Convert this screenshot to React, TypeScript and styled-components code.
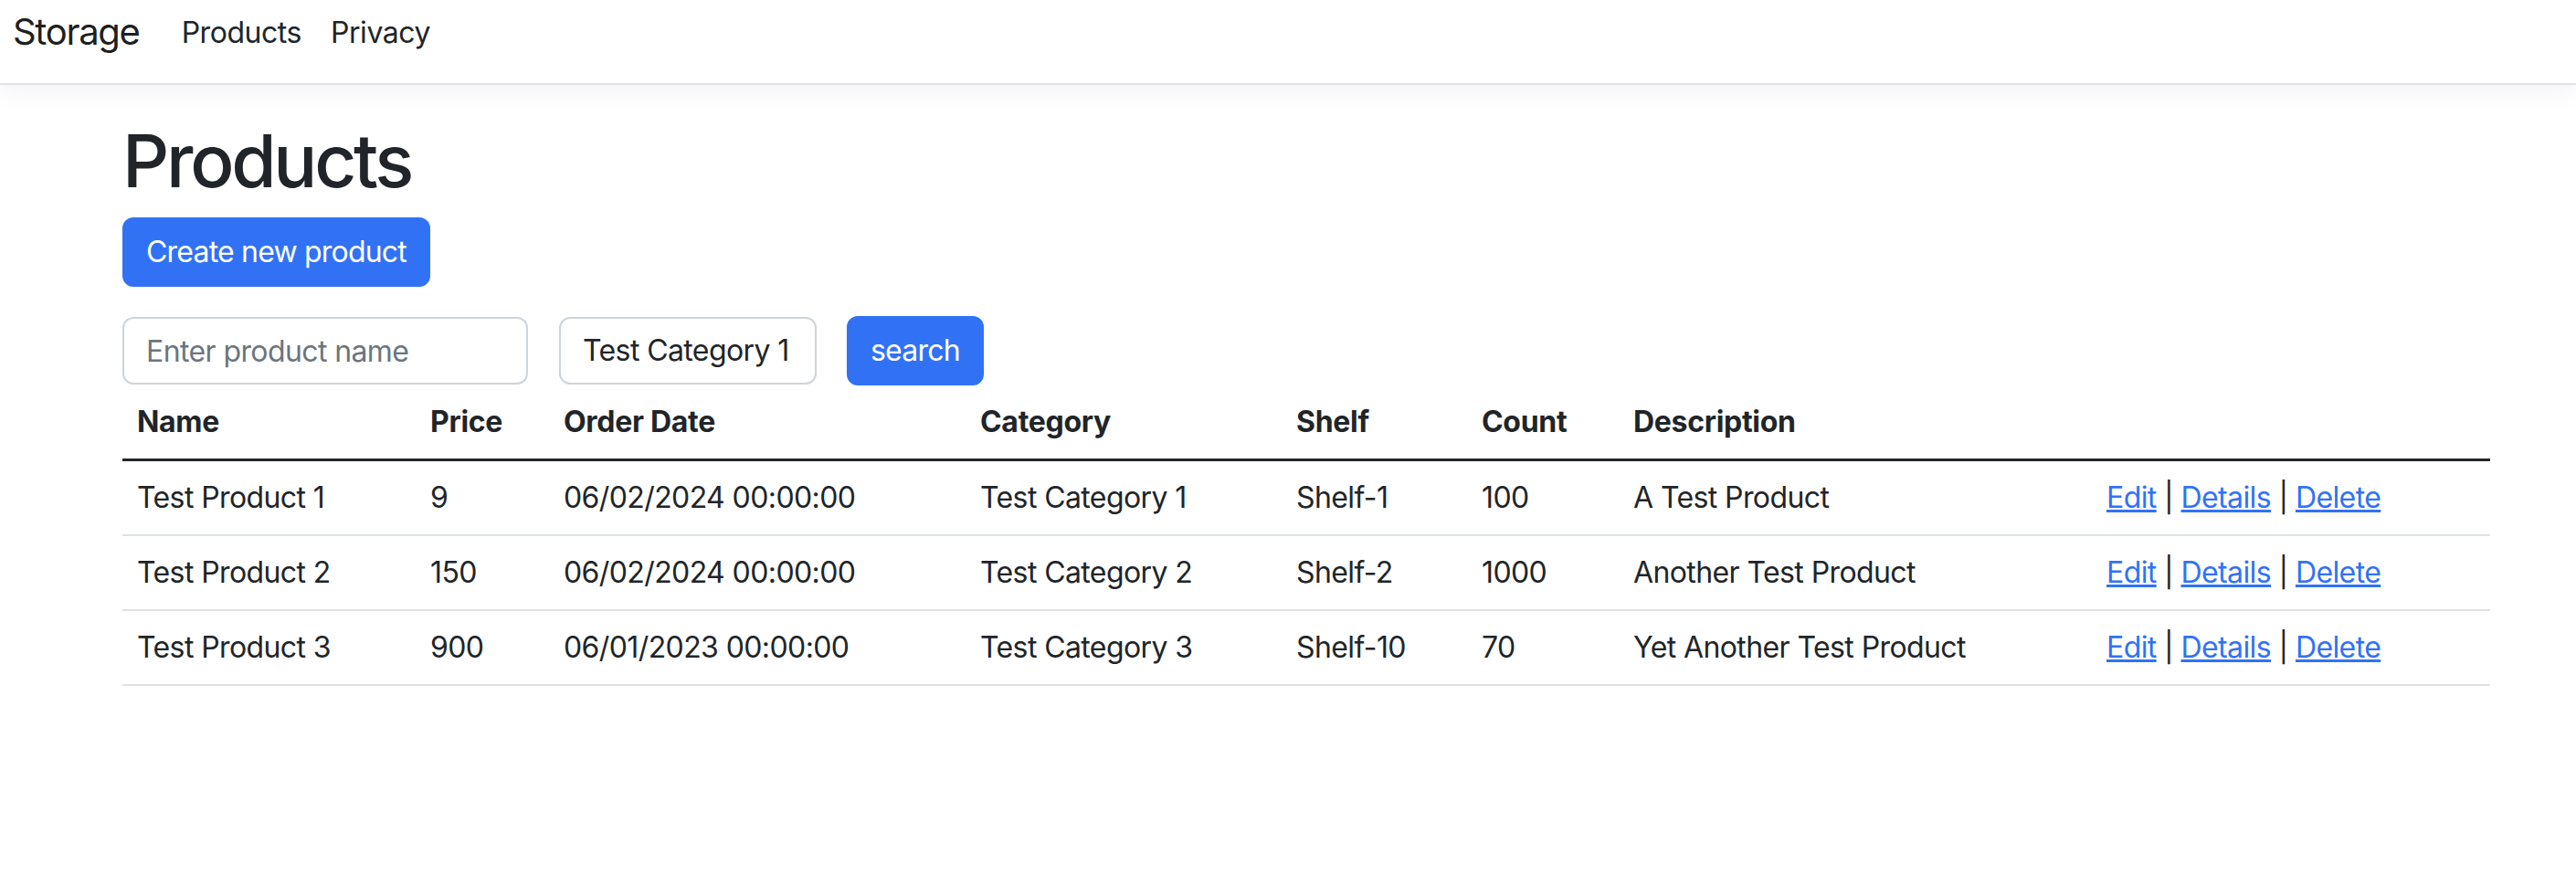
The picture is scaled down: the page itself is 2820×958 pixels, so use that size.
import React from "react";
import styled, { createGlobalStyle } from "styled-components";

const Global = createGlobalStyle`
  html, body { margin: 0; padding: 0; background: #ffffff; }
  body {
    font-family: Inter, "Noto Sans", "Liberation Sans", sans-serif;
    font-size: 32px;
    line-height: 48px;
    letter-spacing: -0.6px;
    color: #212529;
  }
  *, *::before, *::after { box-sizing: border-box; }
`;

const BLUE = "#3172f5";

const NavBar = styled.nav`
  height: 93px;
  display: flex;
  align-items: flex-start;
  padding: 0 14px;
  background: #ffffff;
  border-bottom: 2px solid #dee2e6;
  box-shadow: 0 8px 24px rgba(0, 0, 0, 0.05);
`;

const Brand = styled.a`
  font-size: 40px;
  line-height: 60px;
  letter-spacing: -1.3px;
  margin-top: 5px;
  margin-right: 30px;
  color: rgba(0, 0, 0, 0.9);
  text-decoration: none;
`;

const NavList = styled.ul`
  display: flex;
  list-style: none;
  margin: 0;
  padding: 0;
`;

const NavLink = styled.a`
  display: block;
  padding: 12px 16px 0;
  font-size: 32px;
  line-height: 48px;
  letter-spacing: -0.45px;
  color: #212529;
  text-decoration: none;
`;

const Main = styled.main`
  width: 2592px;
  margin: 0 0 0 134px;
  padding-top: 35px;
`;

const Title = styled.h1`
  margin: 0 0 14px;
  font-size: 80px;
  line-height: 96px;
  font-weight: 500;
  letter-spacing: -3.3px;
  color: #212529;
`;

const PrimaryButton = styled.button<{ $px: number }>`
  display: inline-flex;
  align-items: center;
  height: 76px;
  padding: 0 ${(p) => p.$px}px;
  border: 2px solid ${BLUE};
  border-radius: 12px;
  background: ${BLUE};
  color: #ffffff;
  font-family: inherit;
  font-size: 32px;
  line-height: 48px;
  letter-spacing: -0.8px;
  font-weight: 400;
  cursor: pointer;
`;

const CreateRow = styled.div`
  margin-bottom: 32px;
`;

const SearchForm = styled.form`
  display: flex;
  align-items: center;
  height: 76px;
`;

const fieldBase = `
  height: 74px;
  border: 2px solid #ced4da;
  border-radius: 12px;
  padding: 0 24px;
  font-family: inherit;
  font-size: 32px;
  line-height: 48px;
  letter-spacing: -0.6px;
  color: #212529;
  background: #ffffff;
  outline: none;
`;

const TextInput = styled.input<{ $w: number }>`
  ${fieldBase}
  width: ${(p) => p.$w}px;
  margin-right: 34px;
  &::placeholder { color: #6c757d; }
`;

const SelectInput = styled.select<{ $w: number }>`
  ${fieldBase}
  width: ${(p) => p.$w}px;
  margin-right: 33px;
  appearance: none;
  -webkit-appearance: none;
`;

const Table = styled.table`
  width: 2592px;
  border-collapse: collapse;
  table-layout: fixed;
`;

const Th = styled.th`
  text-align: left;
  padding: 16px;
  font-weight: 700;
  letter-spacing: -0.3px;
  border-bottom: 3px solid #212529;
  vertical-align: bottom;
  white-space: nowrap;
`;

const Td = styled.td`
  padding: 16px;
  border-bottom: 2px solid #dee2e6;
  vertical-align: top;
  white-space: nowrap;
`;

const ActionLink = styled.a`
  color: ${BLUE};
  text-decoration: underline;
`;

const columns = [
  { label: "Name", w: 321 },
  { label: "Price", w: 146 },
  { label: "Order Date", w: 456 },
  { label: "Category", w: 346 },
  { label: "Shelf", w: 203 },
  { label: "Count", w: 166 },
  { label: "Description", w: 518 },
  { label: "", w: 436 },
];

const products = [
  { name: "Test Product 1", price: "9", date: "06/02/2024 00:00:00", category: "Test Category 1", shelf: "Shelf-1", count: "100", desc: "A Test Product" },
  { name: "Test Product 2", price: "150", date: "06/02/2024 00:00:00", category: "Test Category 2", shelf: "Shelf-2", count: "1000", desc: "Another Test Product" },
  { name: "Test Product 3", price: "900", date: "06/01/2023 00:00:00", category: "Test Category 3", shelf: "Shelf-10", count: "70", desc: "Yet Another Test Product" },
];

export default function App() {
  return (
    <>
      <Global />
      <header>
        <NavBar>
          <Brand href="#">Storage</Brand>
          <NavList>
            <li><NavLink href="#">Products</NavLink></li>
            <li><NavLink href="#">Privacy</NavLink></li>
          </NavList>
        </NavBar>
      </header>
      <Main>
        <Title>Products</Title>
        <CreateRow>
          <PrimaryButton $px={24} type="button">Create new product</PrimaryButton>
        </CreateRow>
        <SearchForm onSubmit={(e) => e.preventDefault()}>
          <TextInput $w={444} type="text" placeholder="Enter product name" />
          <SelectInput $w={282} defaultValue="Test Category 1">
            <option>Test Category 1</option>
            <option>Test Category 2</option>
            <option>Test Category 3</option>
          </SelectInput>
          <PrimaryButton $px={24} type="submit">search</PrimaryButton>
        </SearchForm>
        <Table>
          <colgroup>
            {columns.map((c, i) => (
              <col key={i} style={{ width: c.w }} />
            ))}
          </colgroup>
          <thead>
            <tr>
              {columns.map((c, i) => (
                <Th key={i}>{c.label}</Th>
              ))}
            </tr>
          </thead>
          <tbody>
            {products.map((p) => (
              <tr key={p.name}>
                <Td>{p.name}</Td>
                <Td>{p.price}</Td>
                <Td>{p.date}</Td>
                <Td>{p.category}</Td>
                <Td>{p.shelf}</Td>
                <Td>{p.count}</Td>
                <Td>{p.desc}</Td>
                <Td>
                  <ActionLink href="#">Edit</ActionLink> |{" "}
                  <ActionLink href="#">Details</ActionLink> |{" "}
                  <ActionLink href="#">Delete</ActionLink>
                </Td>
              </tr>
            ))}
          </tbody>
        </Table>
      </Main>
    </>
  );
}
